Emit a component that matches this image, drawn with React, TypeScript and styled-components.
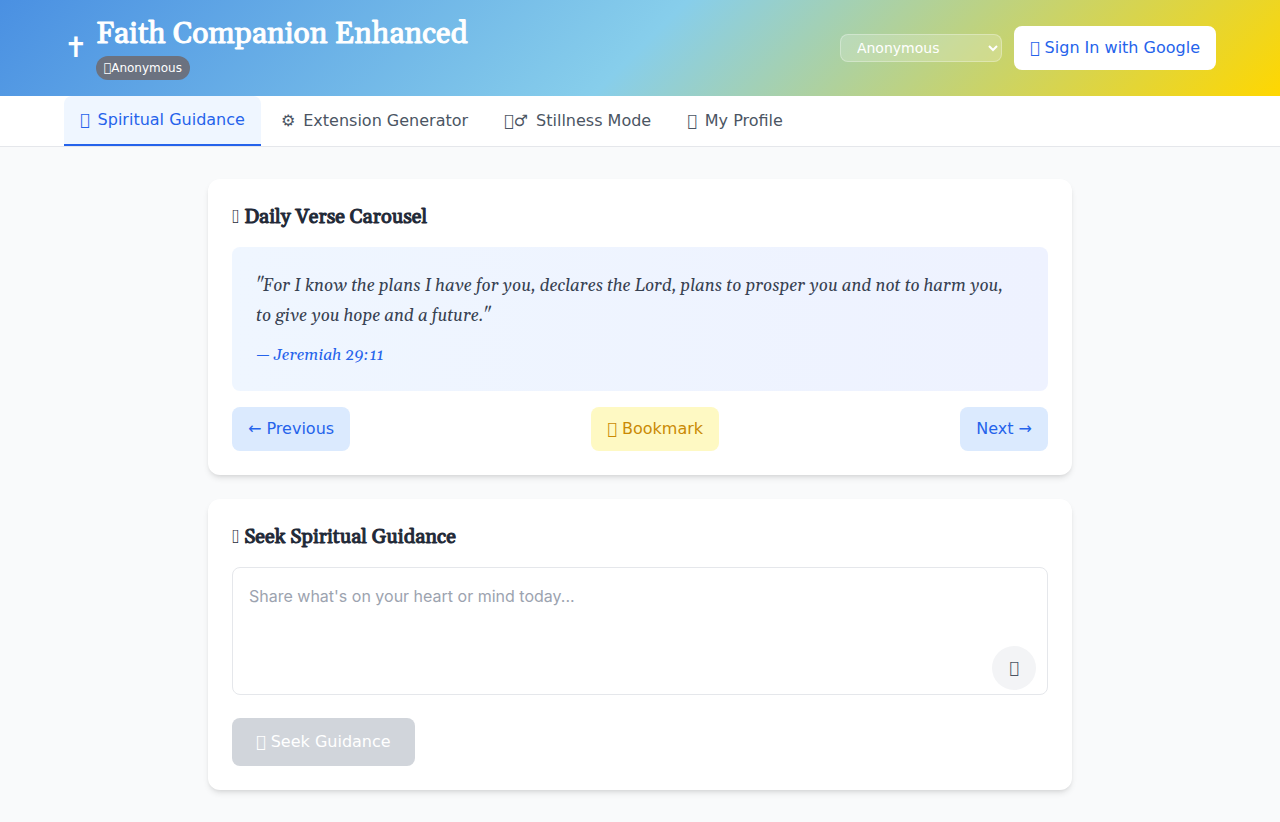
import React, { useState } from "react";
import styled, { createGlobalStyle, css } from "styled-components";

const sans = `"DejaVu Sans", sans-serif`;
const serif = `Gelasio, Georgia, serif`;

const GlobalStyle = createGlobalStyle`
  *, *::before, *::after { box-sizing: border-box; }
  body {
    margin: 0;
    background: #f9fafb;
    color: #1f2937;
    font-family: ${sans};
    font-size: 16px;
    line-height: 24px;
  }
  h1, h2, p { margin: 0; }
  button, select, textarea { font: inherit; margin: 0; }
  button { cursor: pointer; border: 0; }
`;

const Header = styled.header`
  background: linear-gradient(135deg, #4a90e2 0%, #87ceeb 50%, #ffd700 100%);
  color: #fff;
  padding: 16px;
`;

const Container = styled.div`
  max-width: 1152px;
  margin: 0 auto;
`;

const HeaderRow = styled(Container)`
  display: flex;
  align-items: center;
  justify-content: space-between;
`;

const Brand = styled.div`
  display: flex;
  align-items: center;
  gap: 8px;
`;

const Cross = styled.span`
  width: 24px;
  font-size: 28px;
  line-height: 32px;
`;

const Title = styled.h1`
  font-family: ${serif};
  font-size: 30px;
  line-height: 36px;
  font-weight: 400;
  -webkit-text-stroke: 1px currentColor;
`;

const Badge = styled.div`
  display: flex;
  align-items: center;
  width: fit-content;
  margin-top: 4px;
  padding: 4px 8px;
  border-radius: 12px;
  background: #6b7280;
  font-size: 12px;
  line-height: 16px;
`;

const Actions = styled.div`
  display: flex;
  align-items: center;
  gap: 12px;
`;

const ModeSelect = styled.select`
  width: 162px;
  height: 28px;
  padding: 4px 12px;
  border: 1px solid rgba(255, 255, 255, 0.3);
  border-radius: 8px;
  background-color: rgba(255, 255, 255, 0.2);
  color: #fff;
  font-size: 14px;
  line-height: 20px;

  option { color: #1f2937; }
`;

const tones = {
  white: css`background: #fff; color: #2563eb;`,
  blue: css`background: #dbeafe; color: #2563eb;`,
  yellow: css`background: #fef9c3; color: #ca8a04;`,
};

const Button = styled.button<{ $tone: keyof typeof tones }>`
  min-height: 44px;
  padding: 8px 16px;
  border-radius: 8px;
  ${({ $tone }) => tones[$tone]}
`;

const Nav = styled.nav`
  background: #fff;
  border-bottom: 1px solid #e5e7eb;
`;

const Tabs = styled(Container)`
  display: flex;
  gap: 4px;
`;

const Tab = styled.button<{ $active: boolean }>`
  padding: 12px 16px;
  border-radius: 8px 8px 0 0;
  background: transparent;
  color: #4b5563;
  ${({ $active }) =>
    $active &&
    css`
      background: #eff6ff;
      color: #2563eb;
      border-bottom: 2px solid #2563eb;
    `}
`;

const TabIcon = styled.span`
  margin-right: 8px;
`;

const Main = styled.main`
  max-width: 896px;
  margin: 0 auto;
  padding: 32px 16px;
  display: flex;
  flex-direction: column;
  gap: 24px;
`;

const Card = styled.section`
  background: #fff;
  border-radius: 12px;
  padding: 24px;
  box-shadow: 0 4px 6px -1px rgba(0, 0, 0, 0.1), 0 2px 4px -2px rgba(0, 0, 0, 0.1);
`;

const CardTitle = styled.h2`
  margin-bottom: 16px;
  font-family: ${serif};
  font-size: 20px;
  line-height: 28px;
  font-weight: 400;
  -webkit-text-stroke: 1px currentColor;
`;

const TitleIcon = styled.span`
  font-family: "Crimson Text", serif;
  -webkit-text-stroke: 0;
`;

const VerseBox = styled.blockquote`
  margin: 0 0 16px;
  padding: 24px 32px 24px 24px;
  border-radius: 8px;
  background: linear-gradient(90deg, #eff6ff, #eef2ff);
  font-family: ${serif};
  font-style: italic;
`;

const VerseText = styled.p`
  margin-bottom: 12px;
  color: #374151;
  font-size: 17px;
  line-height: 30px;
`;

const VerseRef = styled.cite`
  display: block;
  color: #2563eb;
`;

const VerseControls = styled.div`
  display: flex;
  align-items: center;
  justify-content: space-between;
`;

const InputArea = styled.div`
  position: relative;
  margin-bottom: 16px;
  padding-bottom: 7px;
`;

const Prompt = styled.textarea`
  display: block;
  width: 100%;
  height: 128px;
  padding: 16px;
  border: 1px solid #e5e7eb;
  border-radius: 8px;
  background: #fff;
  color: #1f2937;
  font-family: Inter, sans-serif;
  resize: none;

  &::placeholder { color: #9ca3af; }
`;

const VoiceButton = styled.button`
  position: absolute;
  right: 12px;
  bottom: 12px;
  width: 44px;
  height: 44px;
  padding: 0;
  border-radius: 50%;
  background: #f3f4f6;
  color: #4b5563;
`;

const SubmitButton = styled.button`
  display: block;
  min-height: 48px;
  padding: 12px 24px;
  border-radius: 8px;
  background: #2563eb;
  color: #fff;

  &:disabled {
    background: #d1d5db;
    cursor: not-allowed;
  }
`;

// Private-use glyph, drawn by the font as an empty box.
const box = "\u{F0000}";

const tabs = [
  { icon: box, label: "Spiritual Guidance" },
  { icon: "⚙", label: "Extension Generator" },
  { icon: `${box}♂`, label: "Stillness Mode" },
  { icon: box, label: "My Profile" },
];

const verses = [
  {
    text: "For I know the plans I have for you, declares the Lord, plans to prosper you and not to harm you, to give you hope and a future.",
    reference: "Jeremiah 29:11",
  },
  {
    text: "I can do all things through Christ who strengthens me.",
    reference: "Philippians 4:13",
  },
];

export default function App() {
  const [activeTab, setActiveTab] = useState(0);
  const [verseIndex, setVerseIndex] = useState(0);
  const [message, setMessage] = useState("");
  const verse = verses[verseIndex];
  const step = (by: number) =>
    setVerseIndex((index) => (index + by + verses.length) % verses.length);

  return (
    <>
      <GlobalStyle />
      <Header>
        <HeaderRow>
          <Brand>
            <Cross>✝</Cross>
            <div>
              <Title>Faith Companion Enhanced</Title>
              <Badge>{box}Anonymous</Badge>
            </div>
          </Brand>
          <Actions>
            <ModeSelect aria-label="Account mode" defaultValue="anonymous">
              <option value="anonymous">Anonymous</option>
              <option value="member">Member</option>
            </ModeSelect>
            <Button type="button" $tone="white">{box} Sign In with Google</Button>
          </Actions>
        </HeaderRow>
      </Header>

      <Nav>
        <Tabs>
          {tabs.map((tab, index) => (
            <Tab
              key={tab.label}
              type="button"
              $active={index === activeTab}
              onClick={() => setActiveTab(index)}
            >
              <TabIcon>{tab.icon}</TabIcon>
              {tab.label}
            </Tab>
          ))}
        </Tabs>
      </Nav>

      <Main>
        <Card>
          <CardTitle><TitleIcon>{box}</TitleIcon> Daily Verse Carousel</CardTitle>
          <VerseBox>
            <VerseText>"{verse.text}"</VerseText>
            <VerseRef>— {verse.reference}</VerseRef>
          </VerseBox>
          <VerseControls>
            <Button type="button" $tone="blue" onClick={() => step(-1)}>← Previous</Button>
            <Button type="button" $tone="yellow">{box} Bookmark</Button>
            <Button type="button" $tone="blue" onClick={() => step(1)}>Next →</Button>
          </VerseControls>
        </Card>

        <Card>
          <CardTitle><TitleIcon>{box}</TitleIcon> Seek Spiritual Guidance</CardTitle>
          <InputArea>
            <Prompt
              aria-label="Your message"
              placeholder="Share what's on your heart or mind today..."
              value={message}
              onChange={(event) => setMessage(event.target.value)}
            />
            <VoiceButton type="button" aria-label="Voice input">{box}</VoiceButton>
          </InputArea>
          <SubmitButton type="button" disabled={!message.trim()}>{box} Seek Guidance</SubmitButton>
        </Card>
      </Main>
    </>
  );
}
